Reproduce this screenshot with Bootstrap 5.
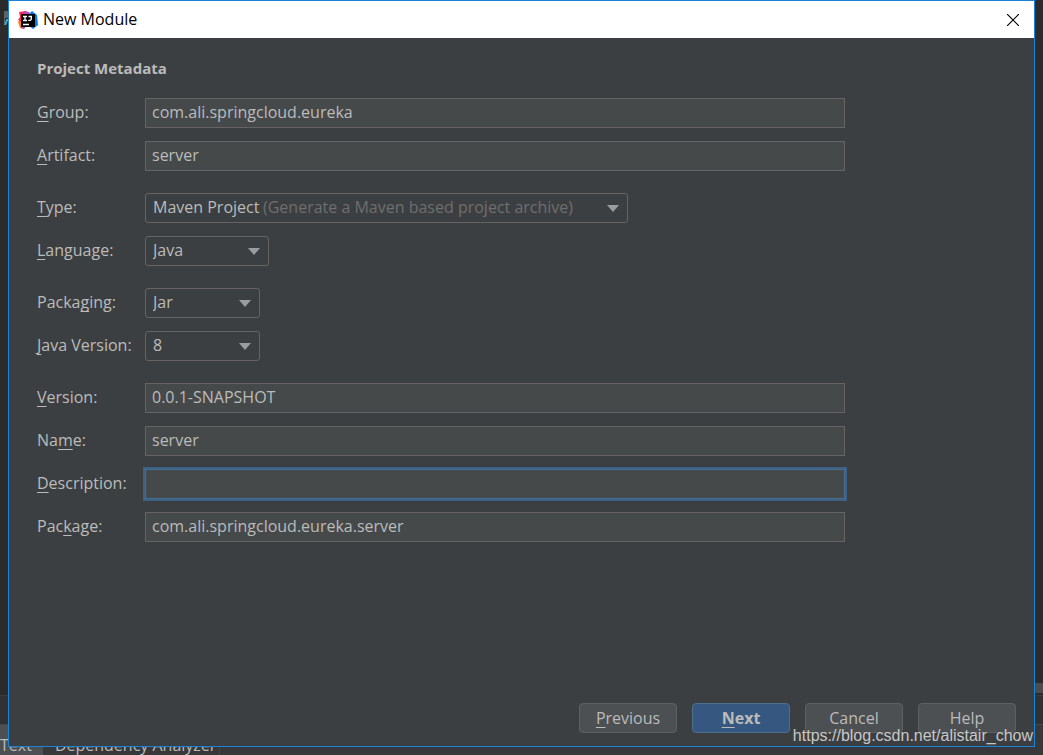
<!DOCTYPE html>
<html lang="en">
<head>
<meta charset="utf-8">
<meta name="viewport" content="width=device-width, initial-scale=1">
<title>New Module</title>
<link href="https://cdn.jsdelivr.net/npm/bootstrap@5.3.0/dist/css/bootstrap.min.css" rel="stylesheet">
<style>
  body { background: #2b2b2b; color: #bbb; font: 16px/24px "Open Sans", "Noto Sans", sans-serif; }
  u { text-underline-offset: 3px; text-decoration-thickness: 1px; text-decoration-skip-ink: none; }

  /* editor window behind the dialog */
  .ide-main { border-bottom: 1px solid #3a3c3e; }
  .ide-file { width: 10px; height: 14px; margin: 11px 0 0 4px; }
  .ide-scroll { width: 8px; margin-bottom: 2px; height: 10px; background: #4a4c4e; }
  .ide-gap { height: 28px; background: #2f3133; }
  .ide-tabs { height: 31px; background: #36383a; border-top: 1px solid #45484a; }
  .ide-tabs span { padding: 8px 11px 0 0; }
  .ide-tabs .ide-tab-on { background: #4c5052; }
  .ide-tabs .ide-tab-off { padding-left: 12px; padding-right: 3px; border-right: 1px solid #45484a; }

  .dlg { inset: 0 8px 8px; background: #3c3f41; border: 1px solid #1883d7; }
  .dlg-title { height: 37px; padding: 0 15px 0 9px; background: #fff; color: #000; }
  .dlg-title span { padding-bottom: 2px; }
  .dlg-close { line-height: 0; }
  .dlg-body { padding: 18px 189px 0 28px; }
  .dlg-body h1 { font-size: 15px; line-height: 24px; margin-bottom: 18px; }
  .field-group { gap: 13px; margin-bottom: 22px; }
  .field-label { width: 108px; flex: none; padding-bottom: 2px; }
  .dlg .form-control, .dlg .form-select {
    height: 30px; padding: 0 6px 2px; font-size: 16px; line-height: 24px; color: #bbb;
    border: 1px solid #646464; box-shadow: none;
  }
  .dlg .form-control { background: #45494a; border-radius: 0; }
  .dlg .form-control.field-active { border-color: #466d94; outline: 2px solid #3d6185; }
  .dlg .form-select {
    background-color: #3c3f41; padding-left: 7px; border-radius: 3px;
    background-image: url("data:image/svg+xml,%3Csvg xmlns='http://www.w3.org/2000/svg' viewBox='0 0 12 7'%3E%3Cpath fill='%239a9da0' d='M0 0h12L6 7z'/%3E%3C/svg%3E");
    background-size: 12px 7px; background-position: right 8px center;
  }
  .pick-wide { width: 483px; }
  .pick-mid { width: 124px; }
  .pick-small { width: 115px; }
  .pick-hint { left: 118px; top: 2px; color: #6e6e6e; pointer-events: none; white-space: nowrap; }

  .dlg-actions { gap: 15px; padding: 0 18px 13px; }
  .dlg-actions .btn {
    width: 98px; height: 30px; padding: 0; font-size: 16px; line-height: 24px; border-radius: 4px;
    color: #bbb; background: #4c5052; border: 1px solid #5e6060;
  }
  .dlg-actions .btn-next { background: #365880; border-color: #4c708c; font-weight: 700; }
  .site-mark { right: 10px; bottom: 7px; color: #c8c8c8; font-family: "Liberation Sans", Arial, sans-serif; }
</style>
</head>
<body>
<div class="position-relative vh-100 overflow-hidden d-flex flex-column">
  <div class="ide-main flex-grow-1 d-flex justify-content-between" aria-hidden="true">
    <svg class="ide-file" viewBox="0 0 10 14"><path fill="#606468" d="M0 0h10v14H0z"/><path fill="#2b2b2b" d="M1 7h9v7H1z"/><path fill="none" stroke="#3cadd0" stroke-width="2" d="M1 14l2-5h3"/></svg>
    <div class="ide-scroll align-self-end"></div>
  </div>
  <div class="ide-gap"></div>
  <div class="ide-tabs d-flex" aria-hidden="true">
    <span class="ide-tab-on">Text</span><span class="ide-tab-off">Dependency Analyzer</span>
  </div>

  <form class="dlg position-absolute d-flex flex-column" onsubmit="return false">
    <header class="dlg-title d-flex align-items-center">
      <svg class="me-1" width="21" height="20" viewBox="0 0 21 20" aria-hidden="true">
        <path fill="#fc801d" d="M0 12l4-4 4 8-2 3-4-1z"/>
        <path fill="#fe2857" d="M1 2l7-1 3 3-6 9-5-3 2-3z"/>
        <path fill="#b24cc4" d="M6 1l5 1 2 3H7zM4 15h5l-3 4-3-1z"/>
        <path fill="#087cfa" d="M11 4l3-3 5 4 1 10-5 4-5-4z"/>
        <path d="M3 4h14v13H3z"/>
        <path stroke="#fff" stroke-width="1.3" fill="none" d="M5 6.500h4M7 6.500v4M5 10.500h4M10.500 6.500h3.500M13.300 6.500v2.500q0 1.700-3 1.400M5 14.500h6"/>
      </svg>
      <span class="flex-grow-1">New Module</span>
      <button type="button" class="dlg-close border-0 bg-transparent p-0" aria-label="Close">
        <svg width="12" height="12" viewBox="0 0 12 12"><path stroke="#000" stroke-width="1.200" d="M0 0l12 12M12 0L0 12"/></svg>
      </button>
    </header>

    <main class="dlg-body flex-grow-1">
      <h1 class="fw-bold">Project Metadata</h1>
      <div class="field-group d-flex flex-column">
        <div class="d-flex align-items-center"><label class="field-label" for="group"><u>G</u>roup:</label><input class="form-control" id="group" type="text" value="com.ali.springcloud.eureka"></div>
        <div class="d-flex align-items-center"><label class="field-label" for="artifact"><u>A</u>rtifact:</label><input class="form-control" id="artifact" type="text" value="server"></div>
      </div>
      <div class="field-group d-flex flex-column">
        <div class="d-flex align-items-center"><label class="field-label" for="type"><u>T</u>ype:</label>
          <div class="position-relative pick-wide">
            <select class="form-select" id="type" aria-describedby="type-hint"><option>Maven Project</option></select>
            <span class="pick-hint position-absolute" id="type-hint">(Generate a Maven based project archive)</span>
          </div>
        </div>
        <div class="d-flex align-items-center"><label class="field-label" for="language"><u>L</u>anguage:</label><select class="form-select pick-mid" id="language"><option>Java</option></select></div>
      </div>
      <div class="field-group d-flex flex-column">
        <div class="d-flex align-items-center"><label class="field-label" for="packaging">Packa<u>g</u>ing:</label><select class="form-select pick-small" id="packaging"><option>Jar</option></select></div>
        <div class="d-flex align-items-center"><label class="field-label" for="java"><u>J</u>ava Version:</label><select class="form-select pick-small" id="java"><option>8</option></select></div>
      </div>
      <div class="field-group d-flex flex-column">
        <div class="d-flex align-items-center"><label class="field-label" for="version"><u>V</u>ersion:</label><input class="form-control" id="version" type="text" value="0.0.1-SNAPSHOT"></div>
        <div class="d-flex align-items-center"><label class="field-label" for="name">Na<u>m</u>e:</label><input class="form-control" id="name" type="text" value="server"></div>
        <div class="d-flex align-items-center"><label class="field-label" for="description"><u>D</u>escription:</label><input class="form-control field-active" id="description" type="text"></div>
        <div class="d-flex align-items-center"><label class="field-label" for="package">Pac<u>k</u>age:</label><input class="form-control" id="package" type="text" value="com.ali.springcloud.eureka.server"></div>
      </div>
    </main>

    <footer class="dlg-actions d-flex justify-content-end">
      <button type="button" class="btn"><u>P</u>revious</button>
      <button type="submit" class="btn btn-next"><u>N</u>ext</button>
      <button type="button" class="btn">Cancel</button>
      <button type="button" class="btn">Help</button>
    </footer>
  </form>
  <div class="site-mark position-absolute">https://blog.csdn.net/alistair_chow</div>
</div>
<script src="https://cdn.jsdelivr.net/npm/bootstrap@5.3.0/dist/js/bootstrap.bundle.min.js"></script>
</body>
</html>
